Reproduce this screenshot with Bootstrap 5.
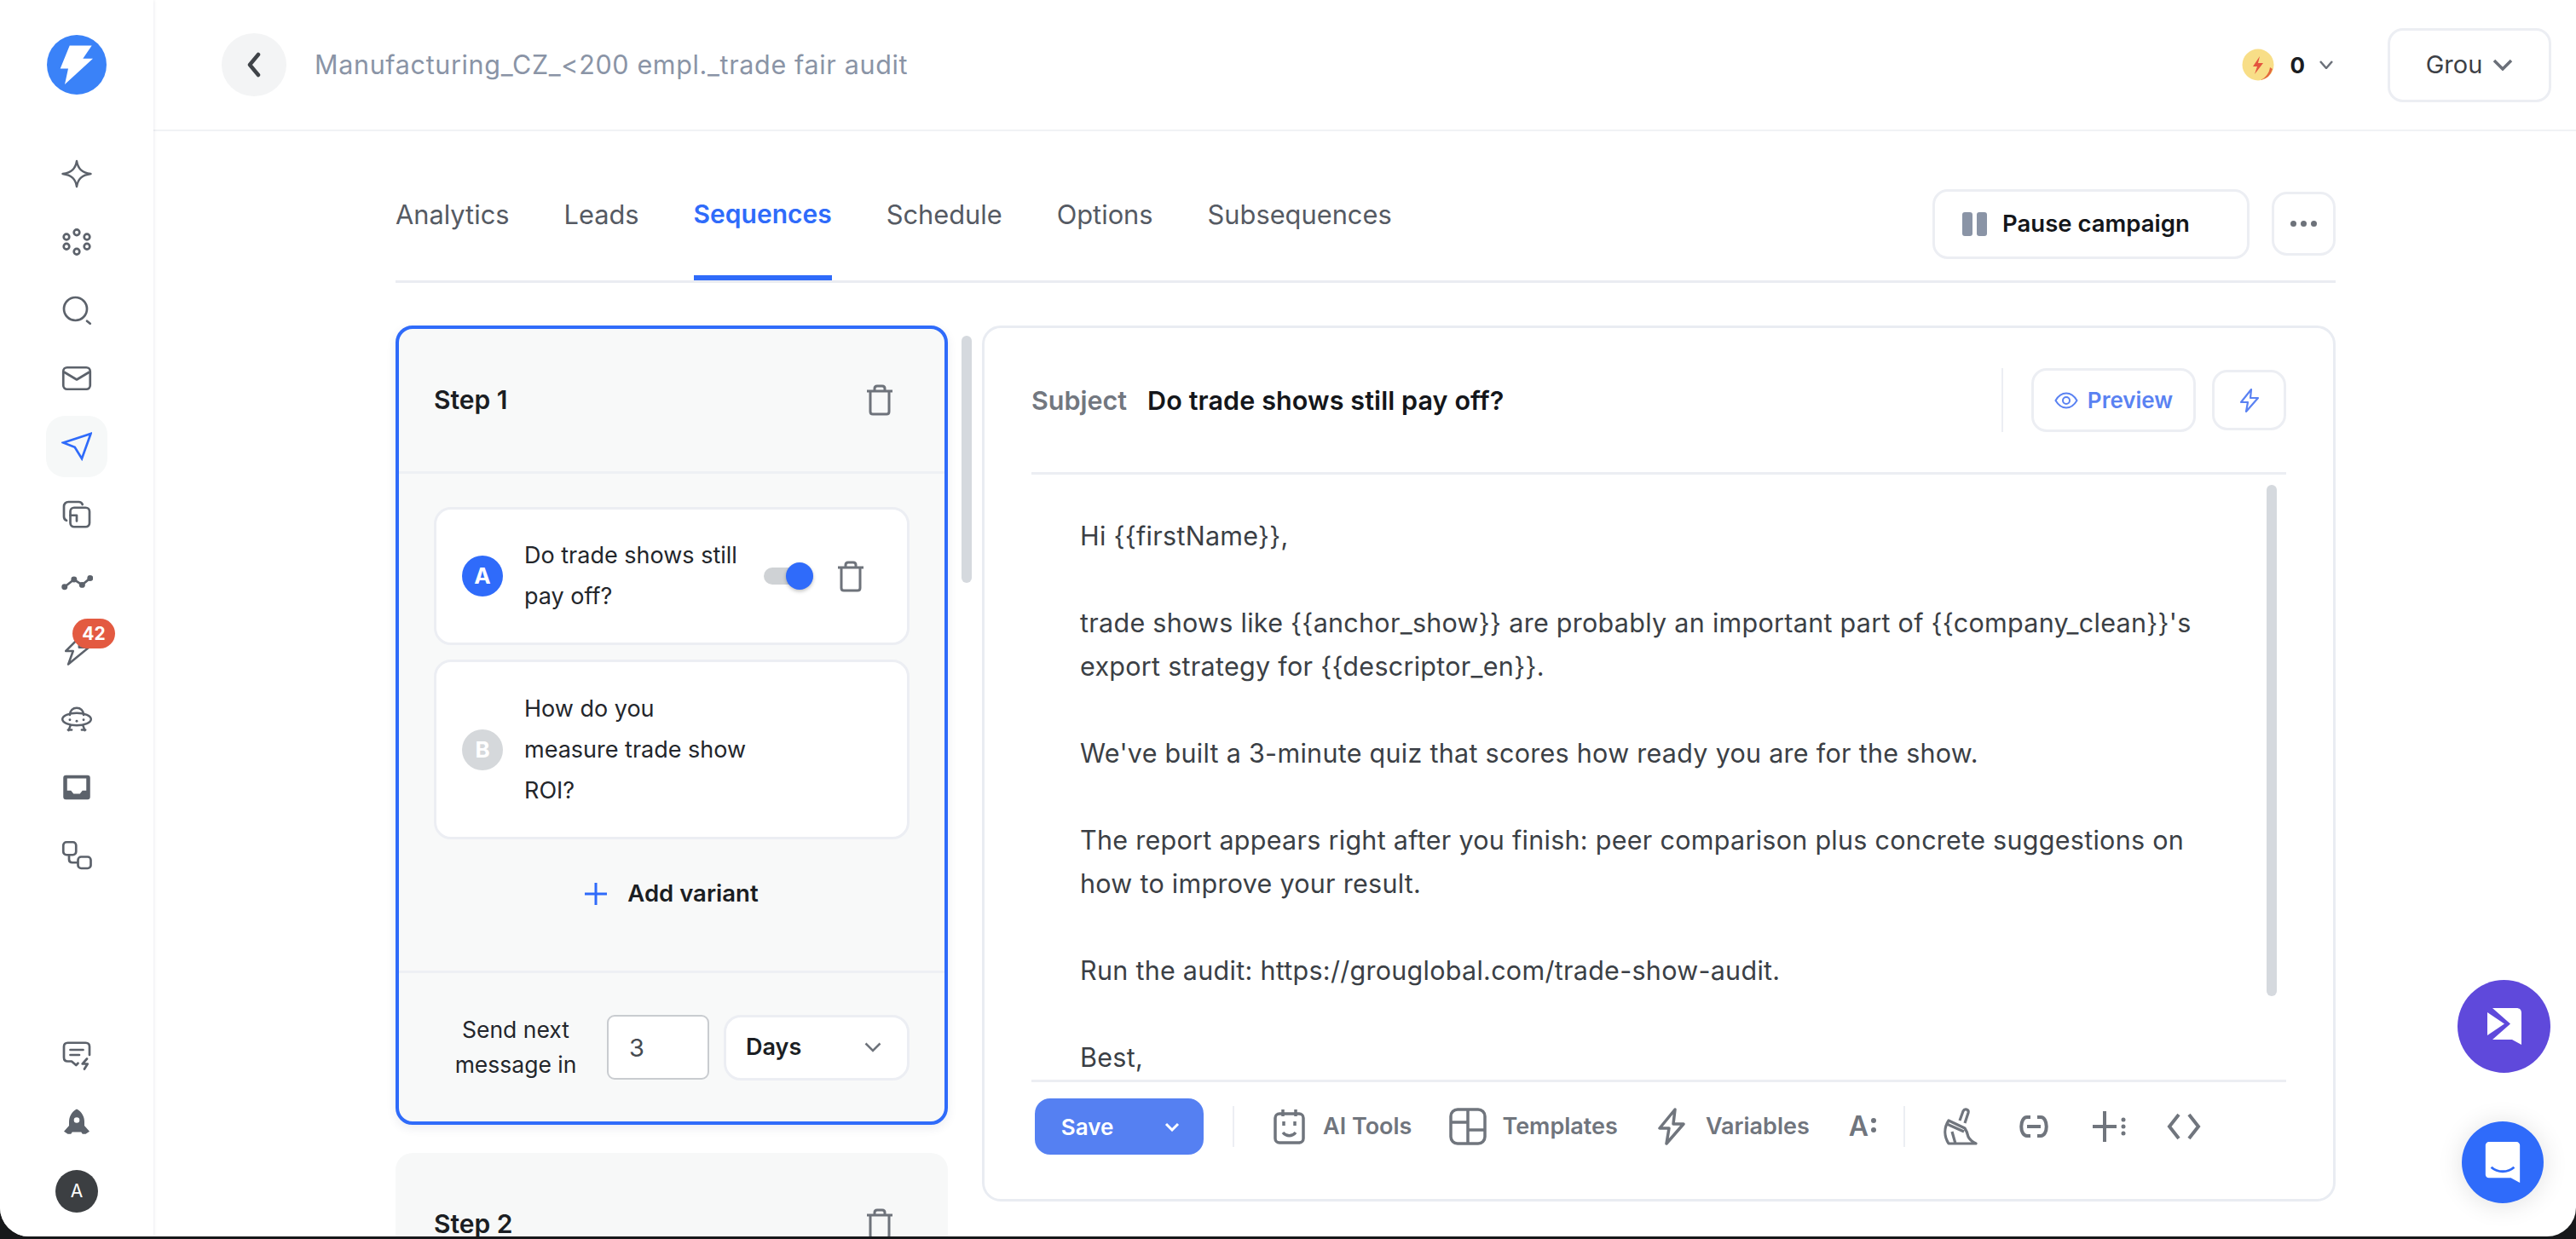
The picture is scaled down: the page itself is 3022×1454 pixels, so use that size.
<!DOCTYPE html>
<html lang="en">
<head>
<meta charset="utf-8">
<title>Sequences</title>
<link href="https://cdn.jsdelivr.net/npm/bootstrap@5.3.0/dist/css/bootstrap.min.css" rel="stylesheet">
<style>
html,body{height:100%;margin:0;overflow:hidden;background:#17181a}
body{font-family:"Inter","Noto Sans",sans-serif;font-size:28px;color:#33373d}
svg{display:block;flex:none}
.shell{height:1451px;background:#fff;border-radius:0 0 34px 34px;overflow:hidden}
.side-rail{width:180px;box-shadow:1px 0 3px rgba(20,30,60,.08);padding-top:41px;z-index:2;background:#fff}
.rail-logo{width:70px;height:70px;border-radius:50%;background:#3a82f8;margin-bottom:57px}
.rail-item{width:72px;height:72px;margin-bottom:8px;border-radius:22px;color:#5c626b}
.rail-item.on{background:#f6f8f8;color:#2f6bfa}
.rail-badge{position:absolute;left:31px;top:-2px;width:50px;height:35px;border-radius:18px;background:#e35a41;color:#fff;font-size:21px;font-weight:700;line-height:35px;text-align:center}
.rail-bottom{margin-top:auto;padding-bottom:28px}
.rail-avatar{width:50px;height:50px;border-radius:50%;background:#3c3f42;color:#fff;font-size:21px;line-height:50px;text-align:center;margin-top:11px}
.top-head{height:154px;border-bottom:2px solid #f1f2f5;padding:0 29px 0 80px}
.back-btn{width:76px;height:74px;border-radius:50%;background:#f3f4f5;color:#3f4348;margin-right:33px}
.camp-title{font-size:30.5px;color:#8a94a6;letter-spacing:.65px}
.coin-num{font-size:26px;font-weight:700;color:#1a1d22;margin:0 17px 0 18px}
.org-btn{width:192px;height:87px;margin-left:64px;border:3px solid #eceef3;border-radius:18px;font-size:29px;color:#3c4046;gap:12px}
.page-body{padding:0 282px 0 284px;min-height:0}
.tab-bar{height:178px;border-bottom:3px solid #eaecf2}
.tab-row{gap:64px;align-self:stretch}
.tab-item{font-size:30.8px;color:#555a63;height:100%;padding-top:75px;margin-bottom:-3px;text-decoration:none}
.tab-item.on{color:#2f6bfa;font-weight:600;font-size:30px;border-bottom:6px solid #2f6bfa}
.tab-actions{padding-top:42px}
.line-btn{background:#fff;border:3px solid #eceef3;border-radius:18px;color:#14161a}
.pause-btn{width:372px;height:82px;font-size:27.5px;font-weight:600;gap:18px;padding:0 0 0 32px;margin-right:26px}
.pause-bars{gap:5px}
.pause-bars i{display:block;width:12px;height:28px;border-radius:3px;background:#8a94a6}
.more-btn{width:75px;height:75px;padding:0;color:#6d727a;gap:5px}
.more-btn i{display:block;width:7px;height:7px;border-radius:50%;background:#6d727a}
.work-area{margin-top:50px;min-height:0}
.step-col{width:648px;flex:none;gap:33px}
.step-card{background:#f8f9f9;border-radius:20px;flex:none}
.step-card.on{border:4px solid #2f6bfa;box-shadow:0 4px 12px rgba(40,60,100,.09)}
.step-head{height:170px;padding:0 60px 0 41px;border-bottom:3px solid #eef0f4}
.step-name{font-size:30px;font-weight:600;color:#1b1e23}
.step-body{padding:39px 41px 0}
.var-card{background:#fff;border:3px solid #eceef3;border-radius:20px;padding-left:30px;margin-bottom:17px}
.var-dot{width:48px;height:48px;border-radius:50%;color:#fff;font-weight:700;font-size:26px;line-height:48px;text-align:center;margin-right:25px;flex:none;background:#2f6bfa}
.var-dot.off{background:#d5d8db}
.var-text{font-size:27px;line-height:48px;color:#23262b}
.mini-toggle{position:relative;width:58px;height:20px;border-radius:10px;background:#cfd2d5;margin:0 28px 0 26px;flex:none}
.mini-toggle i{position:absolute;right:0;top:-6px;width:32px;height:32px;border-radius:50%;background:#2f6bfa;box-shadow:0 2px 4px rgba(0,0,0,.25)}
.add-var{height:66px;margin-top:31px;margin-bottom:57px;gap:24px;font-size:27.5px;font-weight:600;color:#1b1e23}
.step-foot{border-top:3px solid #eef0f4;height:177px;padding:0 41px}
.next-label{width:190px;margin-right:13px;padding-left:2px;font-size:26.5px;line-height:41px;text-align:center;color:#23262b;flex:none}
.num-input.form-control{width:120px;height:76px;border:2px solid #c9ccd0;border-radius:9px;font-size:29px;padding:0 24px;color:#454a50;background:#fff;margin-right:17px;flex:none}
.unit-sel{width:218px;height:77px;background:#fff;border:3px solid #eceef3;border-radius:20px;padding:0 30px 0 23px;font-size:27px;font-weight:600;color:#1b1e23;flex:none}
.side-scroll{width:12px;height:290px;border-radius:6px;background:#d5d9de;margin:12px 12px 0 16px;flex:none}
.mail-card{border:3px solid #e9ecf2;border-radius:22px;height:1028px;min-width:0;flex:1 1 0;background:#fff}
.subj-row{height:172px;margin:0 55px;border-bottom:3px solid #eceef3;flex:none}
.subj-key{font-size:30.5px;font-weight:600;color:#72777f;margin-right:24px}
.subj-val{font-size:30.5px;font-weight:600;color:#14161a;letter-spacing:.1px}
.subj-sep{width:2px;height:75px;background:#eceef3;margin-right:33px}
.prev-btn{width:193px;height:75px;border:3px solid #eceef3;border-radius:18px;color:#5a82f2;font-size:26px;font-weight:600;gap:11px;margin-right:19px}
.bolt-btn{width:87px;height:71px;border:3px solid #eceef3;border-radius:18px;color:#5a82f2}
.mail-body{margin:0 55px;flex:1 1 0;min-height:0;overflow:hidden;position:relative}
.mail-text{padding:46px 0 0 57px;font-size:30.5px;line-height:51px;color:#3b3f45;white-space:nowrap;letter-spacing:.28px}
.mail-text p{margin:0 0 51px}
.mail-scroll{position:absolute;right:11px;top:12px;width:12px;height:600px;border-radius:6px;background:#d5d9de}
.tool-row{height:137px;margin:0 55px 0 59px;flex:none;padding-bottom:71px;color:#70757d;font-size:27px;font-weight:600}
.tool-line{height:3px;background:#eceef3;margin:0 55px;flex:none}
.save-group{margin-top:19px;flex:none}
.save-group .btn{background:#5580f2;border:0;color:#fff;height:66px;font-size:26px;font-weight:600;border-radius:18px;padding:0}
.save-group .btn:first-child{width:124px;border-top-right-radius:0;border-bottom-right-radius:0;border-right:1px solid #3e63d8}
.save-group .btn:last-child{width:75px;border-top-left-radius:0;border-bottom-left-radius:0}
.tool-sep{width:2px;height:48px;background:#eceef3;flex:none}
.tool-item{gap:21px;white-space:nowrap}
.tool-row > *{margin-top:19px}
.fab-a,.fab-b{position:fixed;border-radius:50%;z-index:5}
.fab-a{left:2883px;top:1150px;width:109px;height:109px;background:#5f49db}
.fab-b{left:2888px;top:1316px;width:96px;height:96px;background:#2f6bfa;box-shadow:0 2px 30px rgba(0,0,0,.12)}
</style>
</head>
<body>
<div class="shell d-flex">
  <aside class="side-rail d-flex flex-column align-items-center flex-shrink-0">
    <div class="rail-logo d-flex align-items-center justify-content-center">
      <svg width="48" height="50" viewBox="0 0 48 50"><path d="M15.700 2.500H41.700L31.300 17.800H43L10 48 14 29.500H4.700Z" fill="#fff"/></svg>
    </div>
    <div class="rail-item d-flex align-items-center justify-content-center"><svg width="36" height="36" viewBox="0 0 24 24" fill="none" stroke="currentColor" stroke-width="1.6" stroke-linejoin="round"><path d="M12 2C13 8 16 11 23 12 16 13 13 16 12 22 11 16 8 13 1 12 8 11 11 8 12 2Z"/></svg></div>
    <div class="rail-item d-flex align-items-center justify-content-center"><svg width="36" height="36" viewBox="0 0 24 24" fill="none" stroke="currentColor" stroke-width="1.8"><circle cx="12" cy="4.500" r="2.200"/><circle cx="20" cy="8" r="2.200"/><circle cx="20" cy="15.500" r="2.200"/><circle cx="12" cy="19.500" r="2.200"/><circle cx="4" cy="15.500" r="2.200"/><circle cx="4" cy="8" r="2.200"/></svg></div>
    <div class="rail-item d-flex align-items-center justify-content-center"><svg width="36" height="36" viewBox="0 0 24 24" fill="none" stroke="currentColor" stroke-width="1.8" stroke-linecap="round"><circle cx="11" cy="11" r="9"/><path d="M20 20.500 22.500 22.500"/></svg></div>
    <div class="rail-item d-flex align-items-center justify-content-center"><svg width="36" height="36" viewBox="0 0 24 24" fill="none" stroke="currentColor" stroke-width="1.8" stroke-linejoin="round"><rect x="1.500" y="3.500" width="21" height="17" rx="3"/><path d="M2 7 12 13 22 7"/></svg></div>
    <div class="rail-item on d-flex align-items-center justify-content-center"><svg width="36" height="36" viewBox="0 0 24 24" fill="none" stroke="currentColor" stroke-width="1.8" stroke-linejoin="miter"><path d="M1.500 9 23 2 16 21.500 10.500 12.500Z"/></svg></div>
    <div class="rail-item d-flex align-items-center justify-content-center"><svg width="36" height="36" viewBox="0 0 24 24" fill="none" stroke="currentColor" stroke-width="1.8" stroke-linecap="round" stroke-linejoin="round"><path d="M4 16.500C2.500 16 2 15 2 13.500V5.500C2 3.500 3.500 2 5.500 2H13.500C15 2 16 2.500 16.500 4"/><rect x="7" y="6.500" width="15" height="15" rx="3"/><path d="M7 12.500H12V17"/></svg></div>
    <div class="rail-item d-flex align-items-center justify-content-center"><svg width="38" height="38" viewBox="0 0 24 24" fill="none" stroke="currentColor" stroke-width="1.7"><path d="M3 15 10 9.500 16 13.500 22 8.500"/><g fill="currentColor" stroke="none"><circle cx="3" cy="15" r="2.200"/><circle cx="10" cy="9.500" r="2.200"/><circle cx="16" cy="13.500" r="2.200"/><circle cx="22" cy="8.500" r="2.200"/></g></svg></div>
    <div class="rail-item position-relative d-flex align-items-center justify-content-center"><svg width="34" height="38" viewBox="0 0 24 26" fill="none" stroke="currentColor" stroke-width="1.8" stroke-linejoin="round"><path d="M14 2 3 13H9L5 24 22 10H14Z"/></svg><span class="rail-badge">42</span></div>
    <div class="rail-item d-flex align-items-center justify-content-center"><svg width="38" height="36" viewBox="0 0 26 24" fill="none" stroke="currentColor" stroke-width="1.7" stroke-linecap="round"><ellipse cx="13" cy="12" rx="11.500" ry="5"/><path d="M7.500 8.500C7.500 5 10 3 13 3S18.500 5 18.500 8.500M8 17 6.500 21M18 17 19.500 21M9 20.500H6M20 20.500H17"/><g fill="currentColor" stroke="none"><circle cx="7.500" cy="12.500" r="1"/><circle cx="13" cy="13.500" r="1"/><circle cx="18.500" cy="12.500" r="1"/></g></svg></div>
    <div class="rail-item d-flex align-items-center justify-content-center"><svg width="36" height="36" viewBox="0 0 24 24"><path fill="currentColor" fill-rule="evenodd" d="M3.500 2.500H20.500A2 2 0 0 1 22.500 4.500V19.500A2 2 0 0 1 20.500 21.500H3.500A2 2 0 0 1 1.500 19.500V4.500A2 2 0 0 1 3.500 2.500ZM4.500 5V14.500H7.500L9.500 17H14.500L16.500 14.500H19.500V5Z"/></svg></div>
    <div class="rail-item d-flex align-items-center justify-content-center"><svg width="36" height="36" viewBox="0 0 24 24" fill="none" stroke="currentColor" stroke-width="1.8"><rect x="1.500" y="1.500" width="10" height="10" rx="2.500"/><rect x="13" y="13" width="10" height="9" rx="2.500"/><path d="M6 11.500V15C6 16.500 7 17.500 8.500 17.500H13"/></svg></div>
    <div class="rail-bottom mt-auto d-flex flex-column align-items-center">
      <div class="rail-item d-flex align-items-center justify-content-center"><svg width="36" height="36" viewBox="0 0 24 24" fill="none" stroke="currentColor" stroke-width="1.800" stroke-linecap="round" stroke-linejoin="round"><path d="M22 12V5.500C22 3.500 21 2.500 19 2.500H5C3 2.500 2 3.500 2 5.500V14C2 16 3 17 5 17H8L11.500 20L13 18.500"/><path d="M7 8H17M7 12H14"/><path d="M20 15 16.500 19H20.500L18 23" stroke-width="1.800"/></svg></div>
      <div class="rail-item d-flex align-items-center justify-content-center"><svg width="36" height="36" viewBox="0 0 24 24"><path fill="currentColor" fill-rule="evenodd" d="M12 1C16 3 18 7 18 11V14L22 18.500 19 20.500H16.500L15.500 19H8.500L7.500 20.500H5L2 18.500 6 14V11C6 7 8 3 12 1ZM12 7.500A2.200 2.200 0 1 0 12 11.900 2.200 2.200 0 1 0 12 7.500Z"/></svg></div>
      <div class="rail-avatar">A</div>
    </div>
  </aside>
  <main class="flex-grow-1 d-flex flex-column" style="min-width:0">
    <header class="top-head d-flex align-items-center flex-shrink-0">
      <div class="back-btn d-flex align-items-center justify-content-center"><svg width="20" height="30" viewBox="0 0 20 30" fill="none" stroke="currentColor" stroke-width="4.500" stroke-linecap="round" stroke-linejoin="round"><path d="M15 3 5 15 15 27"/></svg></div>
      <div class="camp-title">Manufacturing_CZ_&lt;200 empl._trade fair audit</div>
      <div class="ms-auto d-flex align-items-center">
        <svg width="38" height="38" viewBox="0 0 38 38"><circle cx="19" cy="19" r="18.500" fill="#f8de87"/><path d="M36 24A18.500 18.500 0 0 1 22 37C28 34 32 29 33 22Z" fill="#e4683e"/><path d="M21 9 13 21H18L15 30 25 17H19Z" fill="#e4553f"/></svg>
        <span class="coin-num">0</span>
        <svg width="16" height="10" viewBox="0 0 16 10" fill="none" stroke="#6b7079" stroke-width="2.500" stroke-linejoin="round"><path d="M1 1 8 9 15 1"/></svg>
        <div class="org-btn d-flex align-items-center justify-content-center">Grou<svg width="24" height="14" viewBox="0 0 24 14" fill="none" stroke="#6b7079" stroke-width="3.500"><path d="M2 2 12 12 22 2"/></svg></div>
      </div>
    </header>
    <div class="page-body flex-grow-1 d-flex flex-column">
      <div class="tab-bar d-flex align-items-center flex-shrink-0">
        <nav class="tab-row d-flex">
          <a class="tab-item" href="#">Analytics</a>
          <a class="tab-item" href="#">Leads</a>
          <a class="tab-item on" href="#">Sequences</a>
          <a class="tab-item" href="#">Schedule</a>
          <a class="tab-item" href="#">Options</a>
          <a class="tab-item" href="#">Subsequences</a>
        </nav>
        <div class="tab-actions ms-auto d-flex align-items-center">
          <button class="btn line-btn pause-btn d-flex align-items-center" type="button"><span class="pause-bars d-flex"><i></i><i></i></span>Pause campaign</button>
          <button class="btn line-btn more-btn d-flex align-items-center justify-content-center" type="button"><i></i><i></i><i></i></button>
        </div>
      </div>
      <div class="work-area d-flex flex-grow-1">
        <div class="step-col d-flex flex-column">
          <section class="step-card on">
            <div class="step-head d-flex align-items-center justify-content-between">
              <span class="step-name">Step 1</span>
              <svg width="32" height="37" viewBox="0 0 32 37" fill="none" stroke="#6e737b" stroke-width="3" stroke-linejoin="round"><path d="M1 8H31M5 8V32C5 34 6 35 8 35H24C26 35 27 34 27 32V8M10 8V5C10 3 11 2 13 2H19C21 2 22 3 22 5V8"/></svg>
            </div>
            <div class="step-body">
              <div class="var-card d-flex align-items-center" style="height:162px">
                <span class="var-dot">A</span>
                <span class="var-text" style="width:255px">Do trade shows still pay off?</span>
                <span class="mini-toggle"><i></i></span>
                <svg width="32" height="37" viewBox="0 0 32 37" fill="none" stroke="#6e737b" stroke-width="3" stroke-linejoin="round"><path d="M1 8H31M5 8V32C5 34 6 35 8 35H24C26 35 27 34 27 32V8M10 8V5C10 3 11 2 13 2H19C21 2 22 3 22 5V8"/></svg>
              </div>
              <div class="var-card d-flex align-items-center mb-0" style="height:211px">
                <span class="var-dot off">B</span>
                <span class="var-text" style="width:270px;white-space:nowrap">How do you<br>measure trade show<br>ROI?</span>
              </div>
              <div class="add-var d-flex align-items-center justify-content-center">
                <svg width="26" height="26" viewBox="0 0 26 26" stroke="#2f6bfa" stroke-width="3"><path d="M13 0V26M0 13H26"/></svg>Add variant
              </div>
            </div>
            <div class="step-foot d-flex align-items-center">
              <div class="next-label">Send next message in</div>
              <input class="form-control num-input" type="text" value="3">
              <div class="unit-sel d-flex align-items-center justify-content-between">Days<svg width="20" height="12" viewBox="0 0 20 12" fill="none" stroke="#6e737b" stroke-width="2.500"><path d="M1.500 1.500 10 10 18.500 1.500"/></svg></div>
            </div>
          </section>
          <section class="step-card" style="background:#f7f8f8">
            <div class="step-head d-flex align-items-center justify-content-between" style="padding-left:45px;padding-right:64px">
              <span class="step-name">Step 2</span>
              <svg width="32" height="37" viewBox="0 0 32 37" fill="none" stroke="#6e737b" stroke-width="3" stroke-linejoin="round"><path d="M1 8H31M5 8V32C5 34 6 35 8 35H24C26 35 27 34 27 32V8M10 8V5C10 3 11 2 13 2H19C21 2 22 3 22 5V8"/></svg>
            </div>
          </section>
        </div>
        <div class="side-scroll"></div>
        <section class="mail-card d-flex flex-column">
          <div class="subj-row d-flex align-items-center">
            <span class="subj-key">Subject</span>
            <span class="subj-val">Do trade shows still pay off?</span>
            <span class="subj-sep ms-auto"></span>
            <div class="prev-btn d-flex align-items-center justify-content-center"><svg width="28" height="20" viewBox="0 0 28 20" fill="none" stroke="currentColor" stroke-width="2"><path d="M1.500 10C5 4 9 1.500 14 1.500S23 4 26.500 10C23 16 19 18.500 14 18.500S5 16 1.500 10Z"/><circle cx="14" cy="10" r="4"/></svg>Preview</div>
            <div class="bolt-btn d-flex align-items-center justify-content-center"><svg width="26" height="30" viewBox="0 0 26 30" fill="none" stroke="currentColor" stroke-width="2.200" stroke-linejoin="round"><path d="M15 2 3 17H11L9 28 23 12H14Z"/></svg></div>
          </div>
          <div class="mail-body">
            <div class="mail-text">
              <p>Hi {{firstName}},</p>
              <p>trade shows like {{anchor_show}} are probably an important part of {{company_clean}}'s<br>export strategy for {{descriptor_en}}.</p>
              <p>We've built a 3-minute quiz that scores how ready you are for the show.</p>
              <p>The report appears right after you finish: peer comparison plus concrete suggestions on<br>how to improve your result.</p>
              <p>Run the audit: https://grouglobal.com/trade-show-audit.</p>
              <p>Best,</p>
            </div>
            <div class="mail-scroll"></div>
          </div>
          <div class="tool-line"></div>
          <div class="tool-row d-flex align-items-start">
            <div class="btn-group save-group"><button class="btn" type="button">Save</button><button class="btn d-flex align-items-center justify-content-center" type="button"><svg width="18" height="11" viewBox="0 0 18 11" fill="none" stroke="#fff" stroke-width="3"><path d="M2 2 9 9 16 2"/></svg></button></div>
            <span class="tool-sep" style="margin-left:34px;margin-top:28px"></span>
            <div class="tool-item d-flex align-items-center" style="margin-left:46px;height:66px"><svg width="37" height="42" viewBox="0 0 37 42" fill="none" stroke="#70757d" stroke-width="3.500" stroke-linejoin="round"><rect x="2" y="6" width="33" height="34" rx="5"/><path d="M11 1V9M26 1V9M12 15V20M25 15V20M11 28C15 33 22 33 26 28"/></svg>AI Tools</div>
            <div class="tool-item d-flex align-items-center" style="margin-left:44px;height:66px;gap:18px"><svg width="44" height="44" viewBox="0 0 44 44" fill="none" stroke="#70757d" stroke-width="3.500"><rect x="2" y="2" width="40" height="40" rx="8"/><path d="M22 2V42M2 17H22M22 26H42"/></svg>Templates</div>
            <div class="tool-item d-flex align-items-center" style="margin-left:47px;height:66px;gap:24px"><svg width="32" height="44" viewBox="0 0 32 44" fill="none" stroke="#70757d" stroke-width="3.500" stroke-linejoin="round"><path d="M20 2 2 24H13L10 42 30 19H18Z"/></svg>Variables</div>
            <div class="tool-item d-flex align-items-center" style="margin-left:46px;height:66px;gap:3px;font-size:32px">A<svg width="6" height="22" viewBox="0 0 6 22" fill="#70757d"><circle cx="3" cy="4" r="3"/><circle cx="3" cy="15" r="3"/></svg></div>
            <span class="tool-sep" style="margin-left:32px;margin-top:28px"></span>
            <div class="tool-item d-flex align-items-center" style="margin-left:43px;height:66px"><svg width="42" height="44" viewBox="0 0 42 44" fill="none" stroke="#70757d" stroke-width="3.200" stroke-linejoin="round"><path d="M27 18 31 6C32 2 27 0 25 4L21 15M8 15 27 24C29 27 30 29 31 34 33 38 36 40 40 42H8C3 34 2 24 8 15ZM12 28 16 42M6 19 26 28"/></svg></div>
            <div class="tool-item d-flex align-items-center" style="margin-left:47px;height:66px"><svg width="38" height="28" viewBox="0 0 38 28" fill="none" stroke="#70757d" stroke-width="4"><path d="M15 3H11C2 3 2 25 11 25H15M23 3H27C36 3 36 25 27 25H23M11 14H27"/></svg></div>
            <div class="tool-item d-flex align-items-center" style="margin-left:50px;height:66px"><svg width="39" height="44" viewBox="0 0 39 44" stroke="#70757d" stroke-width="4" fill="#70757d"><path d="M14 4V40M0 22H28" fill="none"/><circle cx="36" cy="14" r="2.500" stroke="none"/><circle cx="36" cy="22" r="2.500" stroke="none"/><circle cx="36" cy="30" r="2.500" stroke="none"/></svg></div>
            <div class="tool-item d-flex align-items-center" style="margin-left:48px;height:66px"><svg width="40" height="36" viewBox="0 0 40 36" fill="none" stroke="#70757d" stroke-width="4"><path d="M14 4 3 18 14 32M26 4 37 18 26 32"/></svg></div>
          </div>
        </section>
      </div>
    </div>
  </main>
</div>
<div class="fab-a d-flex align-items-center justify-content-center"><svg width="40" height="43" viewBox="0 0 40 43"><path fill="#fff" d="M6 0H34C38 0 40 2 40 6V43L29 37H6L27 18.500Z"/><path fill="#fff" d="M0 5 20 18.500 0 32Z"/></svg></div>
<div class="fab-b d-flex align-items-center justify-content-center"><svg width="42" height="48" viewBox="0 0 42 50"><path fill="#fff" d="M4 0H38C40 0 42 2 42 4V50L31 44H4C2 44 0 42 0 40V4C0 2 2 0 4 0Z"/><path fill="none" stroke="#2f6bfa" stroke-width="3" d="M7 31C15 38 27 38 35 31"/></svg></div>
<script src="https://cdn.jsdelivr.net/npm/bootstrap@5.3.0/dist/js/bootstrap.bundle.min.js"></script>
</body>
</html>
